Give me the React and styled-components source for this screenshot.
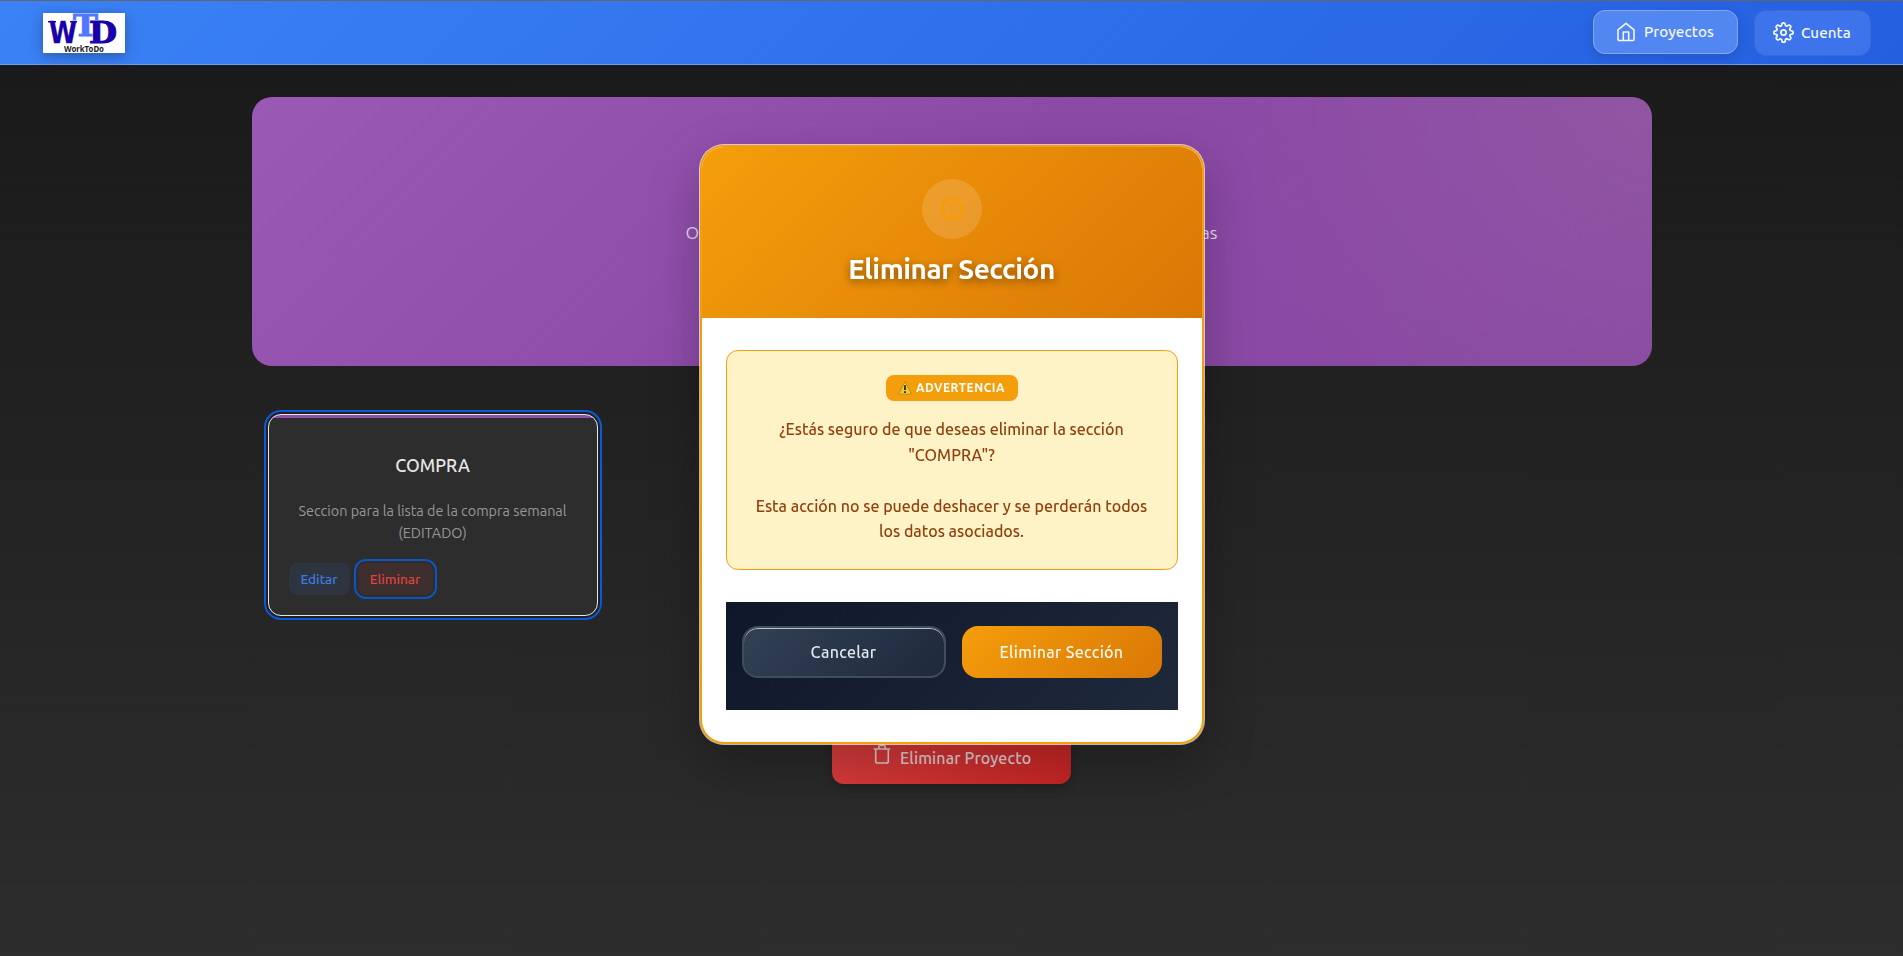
import React from "react";
import styled, { createGlobalStyle, css } from "styled-components";

const Global = createGlobalStyle`
  *, *::before, *::after { box-sizing: border-box; }
  html, body { margin: 0; height: 100%; overflow: hidden; }
  body {
    font-family: Ubuntu, "Noto Sans", "Open Sans", sans-serif;
    background: #2d2d2d;
    color: #e0e0e0;
  }
  h1, h2, h3, p { margin: 0; }
  button { font-family: inherit; border: none; padding: 0; }
`;

const Page = styled.div`
  height: 956px;
  display: flex;
  flex-direction: column;
  background: linear-gradient(180deg, #1a1a1a 65px, #2d2d2d 100%);
`;

const Navbar = styled.header`
  height: 65px;
  flex: none;
  display: flex;
  align-items: center;
  justify-content: space-between;
  padding: 0 32px 0 43px;
  border-top: 1px solid #656565;
  border-bottom: 1px solid #6f9cf3;
  background: linear-gradient(135deg, #3b82f6 0%, #245fe0 100%);
`;

const Logo = styled.svg`
  width: 82px;
  height: 40px;
  overflow: visible;
  background: #fff;
  box-shadow: 0 3px 12px rgba(0, 0, 0, 0.3);
`;

const NavLinks = styled.nav`
  display: flex;
  align-items: center;
  gap: 16px;
`;

const NavLink = styled.a`
  display: flex;
  align-items: center;
  gap: ${(p) => (p.$active ? 8 : 7)}px;
  width: ${(p) => (p.$active ? 145 : 117)}px;
  height: ${(p) => (p.$active ? 44 : 46)}px;
  padding: 0 0 1px ${(p) => (p.$active ? 22 : 18)}px;
  margin-bottom: ${(p) => (p.$active ? 1 : 0)}px;
  border-radius: 12px;
  border: 1px solid ${(p) => (p.$active ? "#83a9f5" : "#3b6bd2")};
  background: ${(p) => (p.$active ? "#5287f1" : "#3d74ec")};
  box-shadow: ${(p) => (p.$active ? "0 4px 12px rgba(0,0,0,0.12)" : "none")};
  color: #f4f7fe;
  font-size: 15.2px;
  font-weight: 500;
  letter-spacing: 0.05px;
  white-space: nowrap;

  svg { flex: none; margin-top: 1px; }
`;

const Main = styled.main`
  width: 1400px;
  margin: 32px auto 0;
  display: flex;
  flex-direction: column;
  align-items: center;
`;

const Hero = styled.section`
  width: 1400px;
  height: 269px;
  display: flex;
  align-items: center;
  justify-content: center;
  border-radius: 20px;
  background:
    radial-gradient(circle at 100% 0%, rgba(170, 130, 160, 0.22), rgba(170, 130, 160, 0) 440px),
    linear-gradient(135deg, #9b59b6 0%, #8c4aa7 50%, #8848a2 100%);
`;

const HeroText = styled.p`
  width: 532px;
  padding-top: 2px;
  display: flex;
  justify-content: space-between;
  font-size: 17.6px;
  line-height: 28px;
  color: #e8daee;
`;

const Sections = styled.div`
  width: 1400px;
  height: 298px;
  padding: 48px 0 0 16px;
`;

const Card = styled.article`
  width: 330px;
  height: 202px;
  padding: 39px 20px 0;
  border: 1px solid #e6e6e6;
  border-radius: 13px;
  background: linear-gradient(180deg, #8e4fa8 3px, #2d2d2d 3px);
  box-shadow: 0 0 0 2px #202020, 0 0 0 4px #0b5ad8;
  text-align: center;
`;

const CardTitle = styled.h3`
  font-size: 17.6px;
  line-height: 24px;
  font-weight: 500;
  letter-spacing: 0.05px;
  color: #e8e8e8;
`;

const CardText = styled.p`
  margin-top: 22px;
  font-size: 14.4px;
  line-height: 22px;
  color: #979797;
`;

const CardActions = styled.div`
  display: flex;
  gap: 8px;
  margin-top: 19px;
`;

const SmallButton = styled.button`
  width: ${(p) => (p.$danger ? 75 : 61)}px;
  height: 32px;
  border-radius: 8px;
  font-size: 13.6px;
  font-weight: 500;
  color: ${(p) => (p.$danger ? "#dd4444" : "#3b7ce2")};
  background: ${(p) => (p.$danger ? "#3f2e2e" : "#2e3440")};
  ${(p) =>
    p.$danger &&
    css`
      box-shadow: 0 0 0 2px #2d2d2d, 0 0 0 4px #0d55c4;
    `}
`;

const DeleteProject = styled.button`
  width: 239px;
  height: 58px;
  margin-top: 62px;
  display: flex;
  justify-content: flex-start;
  align-items: center;
  padding-left: 41px;
  gap: 9px;
  border-radius: 12px;
  color: #dfcfcf;
  background: linear-gradient(135deg, #dc3f40 0%, #c62424 100%);
  box-shadow: 0 4px 10px rgba(0, 0, 0, 0.2);
  font-size: 16px;
  font-weight: 500;
  letter-spacing: 0.12px;

  svg { flex: none; margin-bottom: 3px; }
  span { margin-top: 5px; white-space: nowrap; }
`;

const Overlay = styled.div`
  position: fixed;
  inset: 0;
  display: flex;
  justify-content: center;
  align-items: flex-start;
  padding-top: 145px;
`;

const Dialog = styled.div`
  width: 504px;
  height: 599px;
  border: 2px solid #f59e0b;
  border-radius: 24px;
  overflow: hidden;
  background: #fff;
  box-shadow: 0 0 0 1px rgba(255, 255, 255, 0.68), 0 20px 50px rgba(0, 0, 0, 0.25);
`;

const DialogHeader = styled.header`
  height: 171px;
  padding-top: 32px;
  display: flex;
  flex-direction: column;
  align-items: center;
  background: linear-gradient(135deg, #f59e0b 0%, #d97706 100%);
`;

const IconCircle = styled.div`
  width: 60px;
  height: 60px;
  display: grid;
  place-items: center;
  border-radius: 50%;
  background: rgba(255, 255, 255, 0.14);
`;

const DialogTitle = styled.h2`
  margin-top: 11px;
  font-size: 28px;
  line-height: 38px;
  font-weight: 700;
  letter-spacing: -0.5px;
  color: #fff;
  white-space: nowrap;
  text-shadow: 0 3px 8px rgba(0, 0, 0, 0.45);
`;

const DialogBody = styled.div`
  padding: 32px 24px;
`;

const Warning = styled.div`
  height: 220px;
  display: flex;
  flex-direction: column;
  align-items: center;
  padding-top: 24px;
  border: 1px solid #f59e0b;
  border-radius: 12px;
  background: #fef3c7;
`;

const Badge = styled.div`
  width: 132px;
  height: 26px;
  display: flex;
  align-items: center;
  justify-content: center;
  gap: 4px;
  padding-bottom: 1px;
  border-radius: 8px;
  background: #f59e0b;
  color: #fff;
  font-size: 12px;
  font-weight: 700;
  letter-spacing: 0.5px;
`;

const Message = styled.p`
  margin-top: 16px;
  font-size: 16px;
  line-height: 25.6px;
  font-weight: 500;
  text-align: center;
  color: #92400e;
`;

const DialogActions = styled.footer`
  height: 108px;
  margin-top: 32px;
  padding: 24px 16px 32px;
  display: flex;
  gap: 16px;
  background: linear-gradient(135deg, #0f172a 0%, #1e293b 100%);
`;

const ActionButton = styled.button`
  width: ${(p) => (p.$primary ? 200 : 204)}px;
  height: 52px;
  border-radius: 16px;
  font-size: 16px;
  font-weight: 500;
  letter-spacing: 0.3px;
  color: ${(p) => (p.$primary ? "#fff9ee" : "#e2e8f0")};
  ${(p) =>
    p.$primary
      ? css`
          background: linear-gradient(135deg, #f59e0b 0%, #d97706 100%);
        `
      : css`
          border: 2px solid #414d5d;
          background: linear-gradient(135deg, #334155 0%, #1e293b 100%) padding-box;
          box-shadow: inset 0 1px 0 #b9c0c9;
        `}
`;

const WorkToDoLogo = () => (
  <Logo viewBox="0 0 82 40">
    <g fontFamily="'DejaVu Serif', serif" fontWeight="700">
      <g fill="#1a00aa" stroke="#1a00aa">
        <text x="6" y="30" fontSize="30" textLength="28" lengthAdjust="spacingAndGlyphs" strokeWidth="0.3" fontFamily="'DejaVu Sans', sans-serif">W</text>
        <path d="M5 8.700h8M27 8.700h7" strokeWidth="1.600" />
        <text x="46" y="30" fontSize="29.500" textLength="28" lengthAdjust="spacingAndGlyphs" strokeWidth="1.100">D</text>
      </g>
      <text x="30" y="22.500" fontSize="29.500" textLength="25" lengthAdjust="spacingAndGlyphs" fill="#5276ff" stroke="#5276ff" strokeWidth="0.800">T</text>
      <text x="21" y="38.600" fontSize="8.200" textLength="40" lengthAdjust="spacingAndGlyphs" fill="#222" fontFamily="'Noto Sans', sans-serif">WorkToDo</text>
    </g>
  </Logo>
);

const HomeIcon = () => (
  <svg width="20" height="20" viewBox="0 0 20 20" fill="none" stroke="currentColor" strokeWidth="1.600" strokeLinejoin="round">
    <path d="M2 7.800 10 1.300l8 6.500v9.400a1.300 1.300 0 0 1-1.300 1.300H3.300A1.300 1.300 0 0 1 2 17.200z" />
    <path d="M7.300 18.500v-8.500h5.400v8.500" />
  </svg>
);

const GearIcon = () => (
  <svg width="21" height="21" viewBox="0 0 24 24" fill="none" stroke="currentColor" strokeWidth="2" strokeLinejoin="round">
    <circle cx="12" cy="12" r="3" />
    <path d="M19.400 15a1.650 1.650 0 0 0 .33 1.820l.06.06a2 2 0 1 1-2.830 2.830l-.06-.06a1.650 1.650 0 0 0-1.820-.33 1.650 1.650 0 0 0-1 1.510V21a2 2 0 1 1-4 0v-.09A1.650 1.650 0 0 0 9 19.400a1.650 1.650 0 0 0-1.820.33l-.06.06a2 2 0 1 1-2.830-2.830l.06-.06a1.650 1.650 0 0 0 .33-1.820 1.650 1.650 0 0 0-1.510-1H3a2 2 0 1 1 0-4h.09A1.650 1.650 0 0 0 4.600 9a1.650 1.650 0 0 0-.33-1.820l-.06-.06a2 2 0 1 1 2.830-2.830l.06.06a1.650 1.650 0 0 0 1.820.33H9a1.650 1.650 0 0 0 1-1.510V3a2 2 0 1 1 4 0v.09a1.650 1.650 0 0 0 1 1.510 1.650 1.650 0 0 0 1.820-.33l.06-.06a2 2 0 1 1 2.830 2.830l-.06.06a1.650 1.650 0 0 0-.33 1.820V9a1.650 1.650 0 0 0 1.510 1H21a2 2 0 1 1 0 4h-.09a1.650 1.650 0 0 0-1.510 1z" />
  </svg>
);

const TrashIcon = () => (
  <svg width="18" height="20" viewBox="0 0 18 20" fill="none" stroke="currentColor" strokeWidth="1.600" strokeLinejoin="round">
    <path d="M.7 5h16.600M2.700 5v12.500a1.500 1.500 0 0 0 1.500 1.500h9.600a1.500 1.500 0 0 0 1.500-1.500V5M5.800 5V3a1.500 1.500 0 0 1 1.500-1.500h3.400A1.500 1.500 0 0 1 12.200 3v2" />
  </svg>
);

const AlertIcon = () => (
  <svg width="24" height="24" viewBox="0 0 24 24" fill="none" stroke="#f59b05" strokeWidth="2.500">
    <circle cx="12" cy="12" r="10" />
    <path d="M12 7.500v5.500M12 15.200v2.300" />
  </svg>
);

const WarningIcon = () => (
  <svg width="14" height="14" viewBox="0 0 14 14">
    <path d="M7 .6 13.500 13.200H.500z" fill="#f2c531" stroke="#a98820" strokeWidth=".8" strokeLinejoin="round" />
    <path d="M7 4.200v4.800M7 10.200v1.700" stroke="#332e1c" strokeWidth="1.900" />
  </svg>
);

export default function App() {
  return (
    <>
      <Global />
      <Page>
        <Navbar>
          <WorkToDoLogo />
          <NavLinks>
            <NavLink $active><HomeIcon />Proyectos</NavLink>
            <NavLink><GearIcon />Cuenta</NavLink>
          </NavLinks>
        </Navbar>
        <Main>
          <Hero>
            <HeroText><span>O</span><span>as</span></HeroText>
          </Hero>
          <Sections>
            <Card>
              <CardTitle>COMPRA</CardTitle>
              <CardText>Seccion para la lista de la compra semanal<br />(EDITADO)</CardText>
              <CardActions>
                <SmallButton>Editar</SmallButton>
                <SmallButton $danger>Eliminar</SmallButton>
              </CardActions>
            </Card>
          </Sections>
          <DeleteProject><TrashIcon /><span>Eliminar Proyecto</span></DeleteProject>
        </Main>
      </Page>
      <Overlay>
        <Dialog role="dialog">
          <DialogHeader>
            <IconCircle><AlertIcon /></IconCircle>
            <DialogTitle>Eliminar Sección</DialogTitle>
          </DialogHeader>
          <DialogBody>
            <Warning>
              <Badge><WarningIcon />ADVERTENCIA</Badge>
              <Message>
                ¿Estás seguro de que deseas eliminar la sección<br />"COMPRA"?<br /><br />
                Esta acción no se puede deshacer y se perderán todos<br />los datos asociados.
              </Message>
            </Warning>
            <DialogActions>
              <ActionButton>Cancelar</ActionButton>
              <ActionButton $primary>Eliminar Sección</ActionButton>
            </DialogActions>
          </DialogBody>
        </Dialog>
      </Overlay>
    </>
  );
}
